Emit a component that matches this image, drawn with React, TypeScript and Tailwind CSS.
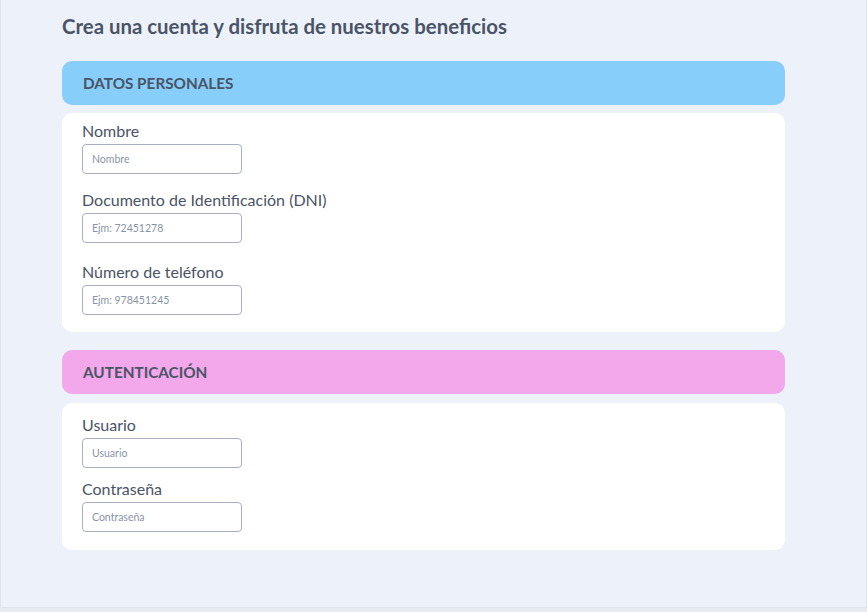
import React from "react";

const fields1 = [
  { label: "Nombre", placeholder: "Nombre", gap: "mt-[15px]" },
  { label: "Documento de Identificación (DNI)", placeholder: "Ejm: 72451278", gap: "mt-[15px]" },
  { label: "Número de teléfono", placeholder: "Ejm: 978451245", gap: "mt-[18px]" },
];

const fields2 = [
  { label: "Usuario", placeholder: "Usuario", gap: "mt-[10px]" },
  { label: "Contraseña", placeholder: "Contraseña", gap: "mt-[10px]" },
];

type Field = { label: string; placeholder: string; gap: string };

const FieldGroup = ({ field, first }: { field: Field; first: boolean }) => (
  <div className={first ? "" : field.gap}>
    <label className="block h-[22px] leading-[22px] text-[16px] text-[#4a5466]">{field.label}</label>
    <input
      type={field.label === "Contraseña" ? "password" : "text"}
      placeholder={field.placeholder}
      className="mt-[2px] block h-[30px] w-[160px] rounded-[4px] border border-[#a7b0c0] bg-white px-[9px] text-[10.5px] text-[#4a5466] placeholder:text-[#8a93a6] outline-none"
    />
  </div>
);

const Section = ({
  title,
  color,
  fields,
  gap,
  pt,
  pb,
}: {
  title: string;
  color: string;
  fields: Field[];
  gap: string;
  pt: string;
  pb: string;
}) => (
  <div>
    <div className={`h-[44px] rounded-[10px] ${color} flex items-center px-[21px]`}>
      <h2 className="text-[15.3px] font-bold uppercase text-[#4a5466]">{title}</h2>
    </div>
    <div className={`${gap} rounded-[10px] bg-white px-[20px] ${pt} ${pb}`}>
      {fields.map((f, i) => (
        <FieldGroup key={f.label} field={f} first={i === 0} />
      ))}
    </div>
  </div>
);

export default function App() {
  return (
    <div className="h-[612px] w-full bg-[#e7eaf0]" style={{ fontFamily: "Lato, 'Noto Sans', sans-serif" }}>
      <div className="h-[608px] w-full border-x border-b border-[#e0e4ec] bg-[#edf1f9] pl-[61px] pr-[81px]">
        <h1 className="pt-[12px] text-[20.4px] font-bold leading-[28px] text-[#4a5466]">
          Crea una cuenta y disfruta de nuestros beneficios
        </h1>
        <div className="mt-[21px]">
          <Section
            title="Datos Personales"
            color="bg-[#87cefa]"
            fields={fields1}
            gap="mt-[8px]"
            pt="pt-[7px]"
            pb="pb-[17px]"
          />
        </div>
        <div className="mt-[18px]">
          <Section
            title="Autenticación"
            color="bg-[#f2a8ea]"
            fields={fields2}
            gap="mt-[9px]"
            pt="pt-[11px]"
            pb="pb-[18px]"
          />
        </div>
      </div>
    </div>
  );
}
